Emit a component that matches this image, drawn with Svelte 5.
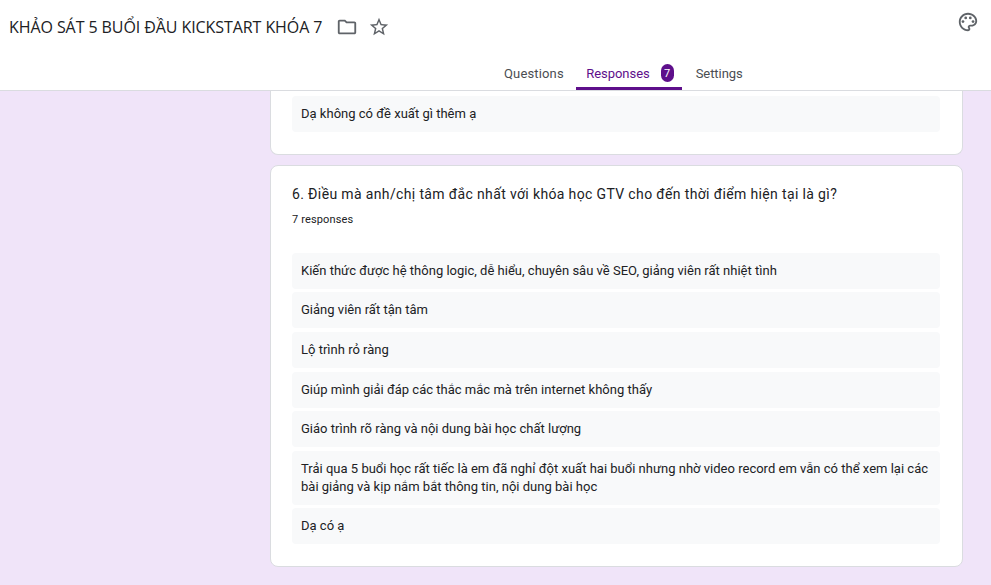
<script>
  const answers = [
    'Kiến thức được hệ thông logic, dễ hiểu, chuyên sâu về SEO, giảng viên rất nhiệt tình',
    'Giảng viên rất tận tâm',
    'Lộ trình rỏ ràng',
    'Giúp mình giải đáp các thắc mắc mà trên internet không thấy',
    'Giáo trình rõ ràng và nội dung bài học chất lượng',
    'Trải qua 5 buổi học rất tiếc là em đã nghỉ đột xuất hai buổi nhưng nhờ video record em vẫn có thể xem lại các bài giảng và kịp nắm bắt thông tin, nội dung bài học',
    'Dạ có ạ'
  ];
</script>

<div class="page">
  <header class="topbar">
    <div class="title-row">
      <h1 class="title">KHẢO SÁT 5 BUỔI ĐẦU KICKSTART KHÓA 7</h1>
      <svg class="ico folder" viewBox="0 0 24 24" aria-hidden="true">
        <path d="M20 6h-8l-2-2H4c-1.1 0-2 .9-2 2v12c0 1.1.9 2 2 2h16c1.1 0 2-.9 2-2V8c0-1.1-.9-2-2-2zm0 12H4V6h5.17l2 2H20v10z"/>
      </svg>
      <svg class="ico star" viewBox="0 0 24 24" aria-hidden="true">
        <path d="M22 9.24l-7.19-.62L12 2 9.19 8.63 2 9.24l5.46 4.73L5.82 21 12 17.27 18.18 21l-1.63-7.03L22 9.24zM12 15.4l-3.76 2.27 1-4.28-3.32-2.88 4.38-.38L12 6.1l1.71 4.04 4.38.38-3.32 2.88 1 4.28L12 15.4z"/>
      </svg>
      <svg class="ico palette" viewBox="0 0 24 24" aria-hidden="true">
        <path d="M12 2C6.49 2 2 6.49 2 12s4.49 10 10 10c1.38 0 2.5-1.12 2.5-2.5 0-.61-.23-1.2-.64-1.67-.08-.1-.13-.21-.13-.33 0-.28.22-.5.5-.5H16c3.31 0 6-2.69 6-6 0-4.96-4.49-9-10-9zm4 13h-1.77c-1.38 0-2.5 1.12-2.5 2.5 0 .61.22 1.19.63 1.65.06.07.14.19.14.35 0 .28-.22.5-.5.5-4.41 0-8-3.59-8-8s3.59-8 8-8 8 3.14 8 7c0 2.21-1.79 4-4 4z"/>
        <circle cx="6.5" cy="11.5" r="1.5"/>
        <circle cx="9.5" cy="7.5" r="1.5"/>
        <circle cx="14.5" cy="7.5" r="1.5"/>
        <circle cx="17.5" cy="11.5" r="1.5"/>
      </svg>
    </div>
    <nav class="tabs">
      <div class="tab">Questions</div>
      <div class="tab active">Responses <span class="badge">7</span></div>
      <div class="tab narrow">Settings</div>
    </nav>
  </header>

  <main class="content">
    <section class="card first">
      <div class="answer">Dạ không có đề xuất gì thêm ạ</div>
    </section>

    <section class="card">
      <h2 class="question">6. Điều mà anh/chị tâm đắc nhất với khóa học GTV cho đến thời điểm hiện tại là gì?</h2>
      <div class="count">7 responses</div>
      <div class="answers">
        {#each answers as a}
          <div class="answer">{a}</div>
        {/each}
      </div>
    </section>
  </main>
</div>

<style>
  :global(body) { margin: 0; overflow: hidden; background: #f0e4f9; }

  .page { height: 585px; overflow: hidden; font-family: Roboto, "Liberation Sans", sans-serif; color: #202124; }

  .topbar { height: 90px; background: #fff; border-bottom: 1px solid #dadce0; position: relative; }

  .title-row { display: flex; align-items: center; height: 54px; padding-left: 9px; }
  .title { margin: 0; font-family: "Open Sans", sans-serif; font-size: 16px; font-weight: 400; color: #202124; letter-spacing: -0.08px; white-space: nowrap; }
  .ico { fill: #5f6368; display: block; }
  .folder { width: 22px; height: 22px; margin-left: 14px; }
  .star { width: 22px; height: 22px; margin-left: 10px; }
  .palette { width: 22px; height: 22px; position: absolute; top: 11px; right: 12px; }

  .tabs { display: flex; padding-left: 494px; gap: 2.5px; height: 36px; }
  .tab { font-size: 13px; font-weight: 400; letter-spacing: 0.15px; color: #4a4d52; padding: 5px 10px 0; display: flex; align-items: center; gap: 11px; border-bottom: 3px solid transparent; box-sizing: border-box; }
  .tab.narrow { letter-spacing: -0.05px; }
  .tab.active { color: #5e0f8b; letter-spacing: -0.05px; border-bottom-color: #5e0f8b; padding-right: 8px; margin-right: 1.5px; }
  .badge { width: 13px; height: 18px; border-radius: 7px; background: #5e0f8b; color: #fff; font-size: 11px; display: flex; align-items: center; justify-content: center; letter-spacing: 0; }

  .content { padding-left: 270px; padding-right: 28px; }

  .card { background: #fff; border: 1px solid #dadce0; border-radius: 8px; padding: 16px 22px 22px 21px; margin-bottom: 10px; }
  .card.first { border-top: 0; border-radius: 0 0 8px 8px; padding-top: 5px; padding-bottom: 22px; }

  .question { margin: 0; font-size: 14px; font-weight: 400; line-height: 24px; letter-spacing: 0.36px; color: #202124; }
  .count { font-size: 11px; line-height: 16px; margin-top: 6px; letter-spacing: 0.15px; color: #202124; }

  .answers { display: flex; flex-direction: column; gap: 3.6px; margin-top: 24.8px; }
  .answer { background: #f8f9fa; border-radius: 4px; padding: 9px; font-size: 13px; line-height: 18px; letter-spacing: 0.01px; color: #202124; }
</style>
